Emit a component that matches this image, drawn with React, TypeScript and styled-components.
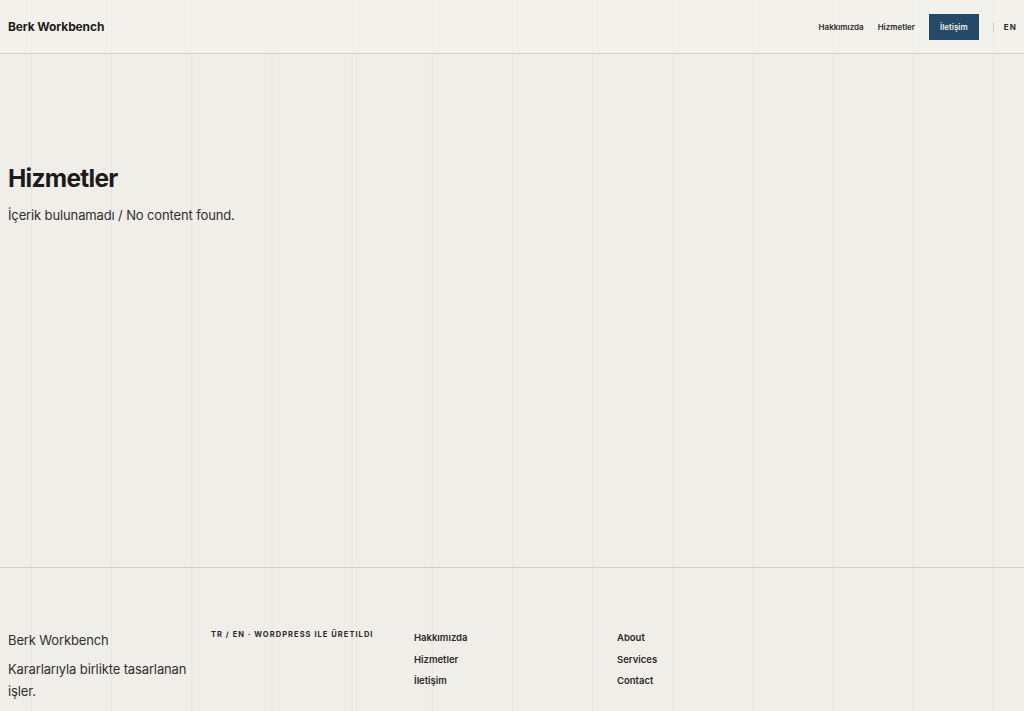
import React from "react";
import styled, { createGlobalStyle } from "styled-components";

const GlobalStyle = createGlobalStyle`
  html, body {
    margin: 0;
    padding: 0;
  }
  body {
    background-color: #f0eee9;
    background-image: linear-gradient(to right, rgba(0, 0, 0, 0.035) 1px, transparent 1px);
    background-size: calc((100% - 62px) / 12) 100%;
    background-position: 31px 0;
    font-family: Inter, "Noto Sans", sans-serif;
    color: #1d1d1b;
    -webkit-font-smoothing: antialiased;
  }
  * {
    box-sizing: border-box;
  }
`;

const Header = styled.header`
  display: flex;
  align-items: center;
  justify-content: space-between;
  height: 54px;
  padding: 0 7px 0 8px;
  background: rgba(245, 243, 238, 0.6);
  border-bottom: 1px solid #d3d1cc;
`;

const Brand = styled.a`
  font-size: 12px;
  font-weight: 700;
  letter-spacing: -0.01em;
  color: #1d1d1b;
  text-decoration: none;
`;

const Nav = styled.nav`
  display: flex;
  align-items: center;
`;

const NavLink = styled.a<{ $active?: boolean }>`
  display: flex;
  align-items: center;
  height: 26px;
  padding: 0 ${({ $active }) => ($active ? "11px" : "7px")};
  margin-left: ${({ $active }) => ($active ? "7px" : "0")};
  font-size: 8px;
  font-weight: 600;
  color: ${({ $active }) => ($active ? "#f1efe9" : "#2a2a28")};
  background: ${({ $active }) => ($active ? "#244a68" : "transparent")};
  text-decoration: none;
`;

const Lang = styled.span`
  margin-left: 14px;
  padding-left: 10px;
  border-left: 1px solid #cfcdc8;
  font-size: 8px;
  font-weight: 700;
  letter-spacing: 0.15em;
  line-height: 10px;
  color: #2a2a28;
`;

const Main = styled.main`
  min-height: 513px;
  padding: 108px 8px 0;
`;

const Title = styled.h1`
  margin: 0;
  font-size: 24.5px;
  font-weight: 700;
  letter-spacing: -0.03em;
  line-height: 32px;
  color: #1b1b19;
`;

const Empty = styled.p`
  margin: 13px 0 0;
  font-size: 13px;
  letter-spacing: -0.01em;
  color: #2f2f2d;
`;

const Footer = styled.footer`
  display: grid;
  grid-template-columns: repeat(4, 187px);
  column-gap: 16px;
  padding: 59px 8px 20px;
  border-top: 1px solid #d3d1cc;
`;

const FooterCol = styled.div`
  display: flex;
  flex-direction: column;
`;

const FooterBrand = styled.p`
  margin: 2px 0 0;
  font-size: 13px;
  letter-spacing: -0.01em;
  line-height: 22px;
  color: #2f2f2d;
`;

const Tagline = styled.p`
  margin: 7px 0 0;
  font-size: 13px;
  letter-spacing: -0.01em;
  line-height: 22px;
  color: #2f2f2d;
`;

const Meta = styled.p`
  margin: 3px 0 0;
  font-size: 7.5px;
  font-weight: 700;
  letter-spacing: 0.14em;
  text-transform: uppercase;
  color: #2a2a28;
`;

const FooterLink = styled.a`
  font-size: 9.5px;
  font-weight: 600;
  line-height: 21.5px;
  color: #2a2a28;
  text-decoration: none;
`;

const trLinks = ["Hakkımızda", "Hizmetler", "İletişim"];
const enLinks = ["About", "Services", "Contact"];

export default function App() {
  return (
    <>
      <GlobalStyle />
      <Header>
        <Brand href="#">Berk Workbench</Brand>
        <Nav>
          <NavLink href="#">Hakkımızda</NavLink>
          <NavLink href="#">Hizmetler</NavLink>
          <NavLink href="#" $active>
            İletişim
          </NavLink>
          <Lang>EN</Lang>
        </Nav>
      </Header>
      <Main>
        <Title>Hizmetler</Title>
        <Empty>İçerik bulunamadı / No content found.</Empty>
      </Main>
      <Footer>
        <FooterCol>
          <FooterBrand>Berk Workbench</FooterBrand>
          <Tagline>Kararlarıyla birlikte tasarlanan işler.</Tagline>
        </FooterCol>
        <FooterCol>
          <Meta>TR / EN · WordPress ile üretildi</Meta>
        </FooterCol>
        <FooterCol>
          {trLinks.map((l) => (
            <FooterLink key={l} href="#">
              {l}
            </FooterLink>
          ))}
        </FooterCol>
        <FooterCol>
          {enLinks.map((l) => (
            <FooterLink key={l} href="#">
              {l}
            </FooterLink>
          ))}
        </FooterCol>
      </Footer>
    </>
  );
}
